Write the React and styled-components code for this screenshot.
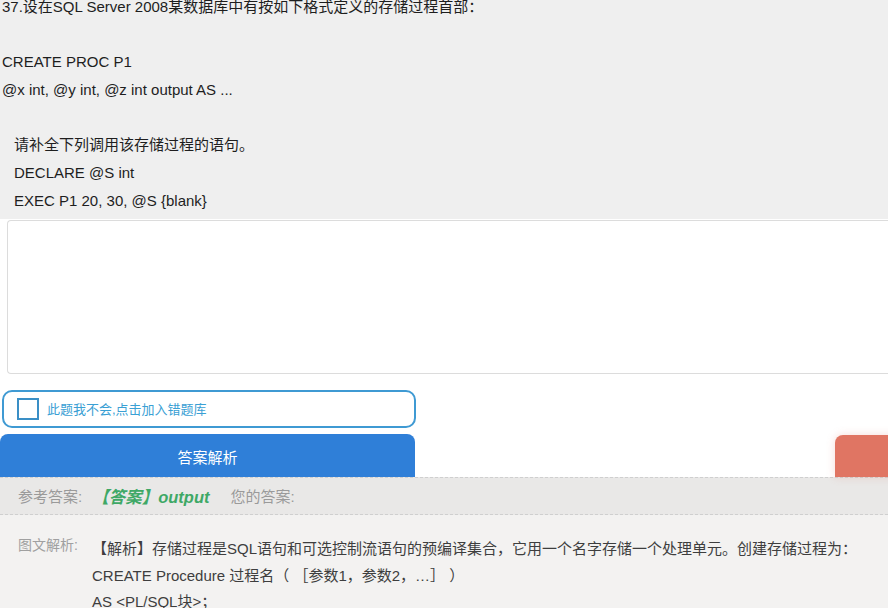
import styled, { createGlobalStyle } from "styled-components";

const GlobalStyle = createGlobalStyle`
  html, body {
    margin: 0;
    padding: 0;
    background: #ffffff;
    overflow: hidden;
  }
  body {
    font-family: "Liberation Sans", "Noto Sans CJK SC", sans-serif;
    color: #222;
  }
`;

const Page = styled.div`
  width: 888px;
  height: 608px;
  overflow: hidden;
  background: #fff;
`;

const Question = styled.div`
  background: #efefef;
  height: 226px;
  margin-top: -7px;
  font-size: 15px;
  line-height: 27.7px;
  color: #1e1e1e;
  padding-left: 2px;
  box-sizing: border-box;
`;

const Line = styled.div`
  padding-left: ${p => (p.$indent ? "12px" : "0")};
  white-space: nowrap;
  min-height: 27.7px;
`;

const AnswerBox = styled.div`
  margin-left: 7px;
  margin-top: 1px;
  height: 154px;
  border: 1px solid #dcdcdc;
  border-right: none;
  border-radius: 4px 0 0 4px;
  background: #fff;
  box-sizing: border-box;
`;

const WrongRow = styled.div`
  margin: 16px 0 0 2px;
  width: 414px;
  height: 38px;
  box-sizing: border-box;
  border: 2px solid #3f9ad3;
  border-radius: 10px;
  display: flex;
  align-items: center;
  padding: 0 0 2px 13px;
  gap: 8px;
  font-size: 13px;
  color: #3aa0d4;
`;

const Check = styled.span`
  width: 22px;
  height: 22px;
  margin-top: 2px;
  box-sizing: border-box;
  border: 2px solid #3a8fc6;
  background: #fff;
`;

const ButtonRow = styled.div`
  margin-top: 6px;
  display: flex;
  height: 43px;
  align-items: flex-start;
`;

const MainButton = styled.div`
  width: 415px;
  height: 43px;
  background: #2f7fd8;
  border-radius: 8px 8px 0 0;
  color: #fff;
  font-size: 15px;
  display: flex;
  justify-content: center;
  padding-top: 12px;
  box-sizing: border-box;
`;

const SideButton = styled.div`
  margin-left: auto;
  margin-top: 1px;
  width: 60px;
  height: 42px;
  margin-right: -7px;
  background: #e07563;
  border-radius: 8px 0 0 0;
  box-shadow: 0 0 8px rgba(224, 117, 99, 0.25);
`;

const Panel = styled.div`
  background: #f3f2f1;
`;

const AnswerBand = styled.div`
  height: 38px;
  box-sizing: border-box;
  background: #e9e8e7;
  border-top: 1px dashed #cfcfcf;
  border-bottom: 1px dashed #cfcfcf;
  display: flex;
  align-items: center;
  padding: 0 0 1px 18px;
  font-size: 15px;
  color: #9a9a9a;
`;

const Correct = styled.span`
  margin-left: 10px;
  color: #3fa866;
  font-weight: bold;
  font-style: italic;
  font-size: 16.5px;
`;

const Yours = styled.span`
  margin-left: 21px;
`;

const Analysis = styled.div`
  display: flex;
  padding: 24px 0 0 18px;
  font-size: 15px;
  line-height: 26.5px;
`;

const Label = styled.div`
  width: 74px;
  flex-shrink: 0;
  color: #a0a0a0;
  font-size: 14px;
  line-height: 18px;
  margin-top: -3px;
`;

const Body = styled.div`
  color: #3e3e3e;
  white-space: nowrap;
  margin-top: -3px;
`;

export default function App() {
  return (
    <Page>
      <GlobalStyle />
      <Question>
        <Line>37.设在SQL Server 2008某数据库中有按如下格式定义的存储过程首部：</Line>
        <Line />
        <Line>CREATE PROC P1</Line>
        <Line>@x int, @y int, @z int output AS ...</Line>
        <Line />
        <Line $indent>请补全下列调用该存储过程的语句。</Line>
        <Line $indent>DECLARE @S int</Line>
        <Line $indent>EXEC P1 20, 30, @S {"{blank}"}</Line>
      </Question>
      <AnswerBox />
      <WrongRow>
        <Check />
        此题我不会,点击加入错题库
      </WrongRow>
      <ButtonRow>
        <MainButton>答案解析</MainButton>
        <SideButton />
      </ButtonRow>
      <Panel>
        <AnswerBand>
          参考答案:
          <Correct>【答案】output</Correct>
          <Yours>您的答案:</Yours>
        </AnswerBand>
        <Analysis>
          <Label>图文解析:</Label>
          <Body>
            <div>【解析】存储过程是SQL语句和可选控制流语句的预编译集合，它用一个名字存储一个处理单元。创建存储过程为：</div>
            <div>CREATE Procedure 过程名（ ［参数1，参数2，…］ ）</div>
            <div>AS &lt;PL/SQL块&gt;；</div>
          </Body>
        </Analysis>
      </Panel>
    </Page>
  );
}
